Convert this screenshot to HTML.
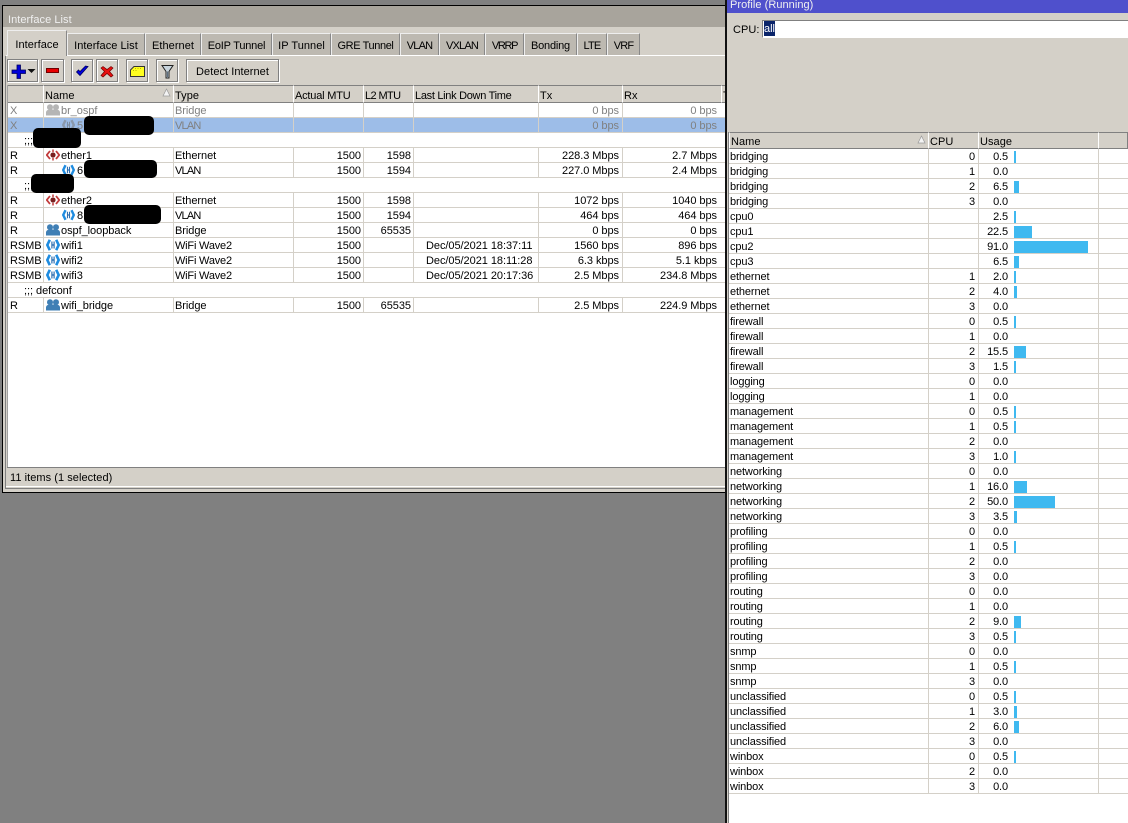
<!DOCTYPE html>
<html><head><meta charset="utf-8"><style>
html,body{margin:0;padding:0}
body{width:1128px;height:823px;overflow:hidden;background:#808080;position:relative;font:11px/14px "Liberation Sans",sans-serif;letter-spacing:.05px;color:#000}
div,span,b,i,u,em{position:absolute;display:block;white-space:nowrap;box-sizing:border-box;font-weight:normal;font-style:normal;text-decoration:none}
.tab{top:33px;height:22px;background:#bdb9b1;border-top:1px solid #eee;border-left:1px solid #eee;border-right:1px solid #888;text-align:center;line-height:25px;overflow:hidden}
.btn{top:59px;height:23px;background:#d4d0c8;border:1px solid #808080;box-shadow:1px 1px 0 #fff,inset 1px 1px 0 #fff;text-align:center;line-height:24px;letter-spacing:.05px}
.btn svg{position:absolute;left:0;top:0}
.h{top:85px;height:18px;background:#d4d0c8;border-top:1px solid #808080;border-bottom:1px solid #808080;border-right:1px solid #808080;border-left:1px solid #fff;line-height:21px;padding-left:1px;overflow:hidden}
.h2{top:132px;height:17px;line-height:18px}
.row{position:relative;height:15px;border-bottom:1px solid #d4d0c8;background:#fff;line-height:14px}
.L .row>span{top:1px;height:14px}
.g{color:#808080}
.sel{background:#9dbde8}
.L{position:absolute;left:8px;top:103px;width:717px;letter-spacing:-.05px}
.v{top:0;height:14px;width:1px;background:#d4d0c8}
.f{left:2px}.n{left:53px}.n2{left:69px}.t{left:167px}
.m{right:364px}.l{right:314px}.d{left:418px}.tx{right:106px}.rx{right:8px}
.c{left:16px}
.vl{letter-spacing:-.8px}.ww{letter-spacing:-.2px}
.R{position:absolute;left:729px;top:149px;width:399px;letter-spacing:-.12px}
.R b{left:1px;top:1px}.R i{right:153px;top:1px}.R u{right:120px;top:1px}.R em{left:285px;top:2px;height:12px;background:#3fb9f0}
svg.ic{position:absolute}
.red{background:#000;border-radius:5px}
</style></head><body>
<svg width="0" height="0" style="position:absolute">
<symbol id="br" viewBox="0 0 14 12"><circle cx="4" cy="3.200" r="3" fill="currentColor"/><circle cx="10" cy="3.200" r="3" fill="currentColor"/><path d="M0 11.500V8.500C0 6.500 2 5.500 4 5.500H10C12 5.500 14 6.500 14 8.500V11.500Z" fill="currentColor"/></symbol>
<symbol id="et" viewBox="0 0 14 12"><path d="M4 2L0.800 6L4 10M10 2L13.200 6L10 10" fill="none" stroke="#c23b3b" stroke-width="1.800"/><path d="M7 .5V3M7 9V11.500" stroke="#c23b3b" stroke-width="1.500"/><circle cx="7" cy="6" r="2.600" fill="#7a1f1f"/></symbol>
<symbol id="wf" viewBox="0 0 14 12"><path d="M3.800 .8L1.300 6L3.800 11.200M10.200 .8L12.700 6L10.200 11.200" fill="none" stroke="#1f8ce0" stroke-width="2.600"/><path d="M5.300 2.500H6.500V9.500H5.300ZM7.500 2.500H8.700V9.500H7.500ZM5.300 5.300H8.700V6.700H5.300Z" fill="#2f6fb0"/></symbol>
</svg>

<!-- left window -->
<div style="left:2px;top:5px;width:730px;height:488px;background:#000"></div>
<div style="left:3px;top:6px;width:730px;height:486px;background:#d4d0c8;border-top:1px solid #a8a49c"></div>
<div style="left:3px;top:7px;width:725px;height:20px;background:#a8a49c"></div>
<div style="left:8px;top:13px;color:#f0f0f0">Interface List</div>
<div style="left:6px;top:55px;width:720px;height:1px;background:#fff"></div>
<div style="left:5px;top:56px;width:1px;height:432px;background:#808080"></div>
<div class="tab" style="left:67px;width:78px">Interface List</div>
<div class="tab" style="left:145px;width:56px">Ethernet</div>
<div class="tab" style="left:201px;width:71px;letter-spacing:-.2px">EoIP Tunnel</div>
<div class="tab" style="left:272px;width:59px">IP Tunnel</div>
<div class="tab" style="left:331px;width:69px;letter-spacing:-.4px">GRE Tunnel</div>
<div class="tab" style="left:400px;width:39px;letter-spacing:-.8px">VLAN</div>
<div class="tab" style="left:439px;width:46px;letter-spacing:-.8px">VXLAN</div>
<div class="tab" style="left:485px;width:39px;letter-spacing:-1.300px">VRRP</div>
<div class="tab" style="left:524px;width:53px;letter-spacing:-.2px">Bonding</div>
<div class="tab" style="left:577px;width:30px;letter-spacing:-.8px">LTE</div>
<div class="tab" style="left:607px;width:33px;letter-spacing:-.8px">VRF</div>
<div class="tab" style="left:7px;top:30px;width:60px;height:26px;background:#d4d0c8;line-height:28px">Interface</div>

<div class="btn" style="left:7px;width:31px"><svg width="29" height="21"><path d="M9 5h3.500V10H17.500v3.500H12.500V18.500H9V13.500H4V10H9z" fill="#0000d8" stroke="#00005a" stroke-width=".8"/><path d="M19.500 9h8l-4 4z" fill="#111"/></svg></div>
<div class="btn" style="left:41px;width:23px"><svg width="21" height="21"><rect x="4.500" y="8.500" width="12" height="4" fill="#e80000" stroke="#700000" stroke-width="1"/></svg></div>
<div class="btn" style="left:71px;width:22px"><svg width="20" height="21"><path d="M4.500 12L8 15.500L16 6.500L13.500 6L8 11.500L6.500 10Z" fill="#0000e0" stroke="#00005a" stroke-width=".8"/></svg></div>
<div class="btn" style="left:96px;width:22px"><svg width="20" height="21"><path d="M6 6.500L10 9.500L14 6.500L16 8L12.500 11.500L16 15.500L14 17L10 13.500L6 17L4 15.500L7.500 11.500L4 8Z" fill="#e81010" stroke="#700000" stroke-width=".7"/></svg></div>
<div class="btn" style="left:126px;width:22px"><svg width="20" height="21"><path d="M7 6.500H17.500V16.500H3.500V10Z" fill="#ffff20" stroke="#333" stroke-width="1"/><path d="M8 8.500h1M10.500 8.500h1M13 8.500h1M6 10.500h1M8.500 10.500h1" stroke="#b8b800" stroke-width="1"/></svg></div>
<div class="btn" style="left:156px;width:22px"><svg width="20" height="21"><path d="M5 5.500H16L12 11.500V18H9V11.500Z" fill="#c8d4dc" stroke="#222" stroke-width="1"/><path d="M10.500 11.500V17" stroke="#607080" stroke-width="1"/></svg></div>
<div class="btn" style="left:186px;width:93px">Detect Internet</div>

<div class="h" style="left:7px;width:37px"></div>
<div class="h" style="left:43px;width:131px">Name<svg style="position:absolute;left:118px;top:2px" width="9" height="9"><path d="M4.500 1L8 8H1Z" fill="#f4f4f4" stroke="#999" stroke-width=".7"/></svg></div>
<div class="h" style="left:173px;width:121px">Type</div>
<div class="h" style="left:293px;width:71px;letter-spacing:-.2px">Actual MTU</div>
<div class="h" style="left:363px;width:51px;letter-spacing:-.6px">L2 MTU</div>
<div class="h" style="left:413px;width:126px;letter-spacing:-.3px">Last Link Down Time</div>
<div class="h" style="left:538px;width:85px">Tx</div>
<div class="h" style="left:622px;width:100px">Rx</div>
<div class="h" style="left:721px;width:10px">T</div>

<div style="left:7px;top:103px;width:720px;height:364px;background:#fff"></div>
<div style="left:7px;top:85px;width:1px;height:382px;background:#a0a0a0"></div>
<div class="L">
<div class="row g"><span class="f">X</span><svg class="ic" style="left:38px;top:1px;color:#b5b5b5" width="14" height="12"><use href="#br"/></svg><span class="n">br_ospf</span><span class="t">Bridge</span><span class="tx">0 bps</span><span class="rx">0 bps</span><i class="v" style="left:35px"></i><i class="v" style="left:165px"></i><i class="v" style="left:285px"></i><i class="v" style="left:355px"></i><i class="v" style="left:405px"></i><i class="v" style="left:530px"></i><i class="v" style="left:614px"></i></div>
<div class="row g sel"><span class="f">X</span><svg class="ic" style="left:54px;top:1px;opacity:.55;filter:grayscale(1)" width="13" height="12"><use href="#wf"/></svg><span class="n2">5</span><span class="t vl">VLAN</span><span class="tx">0 bps</span><span class="rx">0 bps</span><i class="v" style="left:35px"></i><i class="v" style="left:165px"></i><i class="v" style="left:285px"></i><i class="v" style="left:355px"></i><i class="v" style="left:405px"></i><i class="v" style="left:530px"></i><i class="v" style="left:614px"></i></div>
<div class="row"><span class="c">;;;</span></div>
<div class="row"><span class="f">R</span><svg class="ic" style="left:38px;top:1px" width="14" height="12"><use href="#et"/></svg><span class="n">ether1</span><span class="t">Ethernet</span><span class="m">1500</span><span class="l">1598</span><span class="tx">228.3 Mbps</span><span class="rx">2.7 Mbps</span><i class="v" style="left:35px"></i><i class="v" style="left:165px"></i><i class="v" style="left:285px"></i><i class="v" style="left:355px"></i><i class="v" style="left:405px"></i><i class="v" style="left:530px"></i><i class="v" style="left:614px"></i></div>
<div class="row"><span class="f">R</span><svg class="ic" style="left:54px;top:1px" width="13" height="12"><use href="#wf"/></svg><span class="n2">6</span><span class="t vl">VLAN</span><span class="m">1500</span><span class="l">1594</span><span class="tx">227.0 Mbps</span><span class="rx">2.4 Mbps</span><i class="v" style="left:35px"></i><i class="v" style="left:165px"></i><i class="v" style="left:285px"></i><i class="v" style="left:355px"></i><i class="v" style="left:405px"></i><i class="v" style="left:530px"></i><i class="v" style="left:614px"></i></div>
<div class="row"><span class="c">;;;</span></div>
<div class="row"><span class="f">R</span><svg class="ic" style="left:38px;top:1px" width="14" height="12"><use href="#et"/></svg><span class="n">ether2</span><span class="t">Ethernet</span><span class="m">1500</span><span class="l">1598</span><span class="tx">1072 bps</span><span class="rx">1040 bps</span><i class="v" style="left:35px"></i><i class="v" style="left:165px"></i><i class="v" style="left:285px"></i><i class="v" style="left:355px"></i><i class="v" style="left:405px"></i><i class="v" style="left:530px"></i><i class="v" style="left:614px"></i></div>
<div class="row"><span class="f">R</span><svg class="ic" style="left:54px;top:1px" width="13" height="12"><use href="#wf"/></svg><span class="n2">8</span><span class="t vl">VLAN</span><span class="m">1500</span><span class="l">1594</span><span class="tx">464 bps</span><span class="rx">464 bps</span><i class="v" style="left:35px"></i><i class="v" style="left:165px"></i><i class="v" style="left:285px"></i><i class="v" style="left:355px"></i><i class="v" style="left:405px"></i><i class="v" style="left:530px"></i><i class="v" style="left:614px"></i></div>
<div class="row"><span class="f">R</span><svg class="ic" style="left:38px;top:1px;color:#3f7fb5" width="14" height="12"><use href="#br"/></svg><span class="n">ospf_loopback</span><span class="t">Bridge</span><span class="m">1500</span><span class="l">65535</span><span class="tx">0 bps</span><span class="rx">0 bps</span><i class="v" style="left:35px"></i><i class="v" style="left:165px"></i><i class="v" style="left:285px"></i><i class="v" style="left:355px"></i><i class="v" style="left:405px"></i><i class="v" style="left:530px"></i><i class="v" style="left:614px"></i></div>
<div class="row"><span class="f">RSMB</span><svg class="ic" style="left:38px;top:1px" width="14" height="12"><use href="#wf"/></svg><span class="n">wifi1</span><span class="t ww">WiFi Wave2</span><span class="m">1500</span><span class="d">Dec/05/2021 18:37:11</span><span class="tx">1560 bps</span><span class="rx">896 bps</span><i class="v" style="left:35px"></i><i class="v" style="left:165px"></i><i class="v" style="left:285px"></i><i class="v" style="left:355px"></i><i class="v" style="left:405px"></i><i class="v" style="left:530px"></i><i class="v" style="left:614px"></i></div>
<div class="row"><span class="f">RSMB</span><svg class="ic" style="left:38px;top:1px" width="14" height="12"><use href="#wf"/></svg><span class="n">wifi2</span><span class="t ww">WiFi Wave2</span><span class="m">1500</span><span class="d">Dec/05/2021 18:11:28</span><span class="tx">6.3 kbps</span><span class="rx">5.1 kbps</span><i class="v" style="left:35px"></i><i class="v" style="left:165px"></i><i class="v" style="left:285px"></i><i class="v" style="left:355px"></i><i class="v" style="left:405px"></i><i class="v" style="left:530px"></i><i class="v" style="left:614px"></i></div>
<div class="row"><span class="f">RSMB</span><svg class="ic" style="left:38px;top:1px" width="14" height="12"><use href="#wf"/></svg><span class="n">wifi3</span><span class="t ww">WiFi Wave2</span><span class="m">1500</span><span class="d">Dec/05/2021 20:17:36</span><span class="tx">2.5 Mbps</span><span class="rx">234.8 Mbps</span><i class="v" style="left:35px"></i><i class="v" style="left:165px"></i><i class="v" style="left:285px"></i><i class="v" style="left:355px"></i><i class="v" style="left:405px"></i><i class="v" style="left:530px"></i><i class="v" style="left:614px"></i></div>
<div class="row"><span class="c">;;; defconf</span></div>
<div class="row"><span class="f">R</span><svg class="ic" style="left:38px;top:1px;color:#3f7fb5" width="14" height="12"><use href="#br"/></svg><span class="n">wifi_bridge</span><span class="t">Bridge</span><span class="m">1500</span><span class="l">65535</span><span class="tx">2.5 Mbps</span><span class="rx">224.9 Mbps</span><i class="v" style="left:35px"></i><i class="v" style="left:165px"></i><i class="v" style="left:285px"></i><i class="v" style="left:355px"></i><i class="v" style="left:405px"></i><i class="v" style="left:530px"></i><i class="v" style="left:614px"></i></div>
</div>
<div class="red" style="left:84px;top:116px;width:70px;height:19px"></div>
<div class="red" style="left:33px;top:128px;width:48px;height:20px"></div>
<div class="red" style="left:84px;top:160px;width:73px;height:18px"></div>
<div class="red" style="left:31px;top:174px;width:43px;height:19px"></div>
<div class="red" style="left:84px;top:205px;width:77px;height:19px"></div>

<div style="left:7px;top:467px;width:720px;height:1px;background:#808080"></div>
<div style="left:10px;top:471px">11 items (1 selected)</div>
<div style="left:6px;top:486px;width:720px;height:1px;background:#fff"></div>
<div style="left:5px;top:488px;width:720px;height:1px;background:#808080"></div>
<div style="left:0;top:493px;width:726px;height:330px;background:#808080"></div>

<!-- right window -->
<div style="left:725px;top:0;width:403px;height:823px;background:#d4d0c8;border-left:2px solid #111"></div>
<div style="left:727px;top:0;width:401px;height:13px;background:#4f50cc"></div>
<div style="left:730px;top:-2px;color:#f0f0f0">Profile (Running)</div>
<div style="left:733px;top:23px">CPU:</div>
<div style="left:762px;top:20px;width:366px;height:18px;background:#fff;border-top:1px solid #808080;border-left:1px solid #808080;border-bottom:1px solid #fff"></div>
<div style="left:764px;top:21px;width:11px;height:15px;background:#0a246a;color:#fff;line-height:17px;letter-spacing:0">all</div>

<div style="left:729px;top:794px;width:399px;height:29px;background:#fff"></div>
<div style="left:728px;top:132px;width:1px;height:691px;background:#808080"></div>
<div class="h h2" style="left:729px;width:200px">Name<svg style="position:absolute;left:187px;top:2px" width="9" height="9"><path d="M4.500 1L8 8H1Z" fill="#f4f4f4" stroke="#999" stroke-width=".7"/></svg></div>
<div class="h h2" style="left:928px;width:51px">CPU</div>
<div class="h h2" style="left:978px;width:121px">Usage</div>
<div class="h h2" style="left:1098px;width:30px"></div>
<div class="R">
<div class="row"><b>bridging</b><i>0</i><u>0.5</u><em style="width:2px"></em></div>
<div class="row"><b>bridging</b><i>1</i><u>0.0</u></div>
<div class="row"><b>bridging</b><i>2</i><u>6.5</u><em style="width:5px"></em></div>
<div class="row"><b>bridging</b><i>3</i><u>0.0</u></div>
<div class="row"><b>cpu0</b><u>2.5</u><em style="width:2px"></em></div>
<div class="row"><b>cpu1</b><u>22.5</u><em style="width:18px"></em></div>
<div class="row"><b>cpu2</b><u>91.0</u><em style="width:74px"></em></div>
<div class="row"><b>cpu3</b><u>6.5</u><em style="width:5px"></em></div>
<div class="row"><b>ethernet</b><i>1</i><u>2.0</u><em style="width:2px"></em></div>
<div class="row"><b>ethernet</b><i>2</i><u>4.0</u><em style="width:3px"></em></div>
<div class="row"><b>ethernet</b><i>3</i><u>0.0</u></div>
<div class="row"><b>firewall</b><i>0</i><u>0.5</u><em style="width:2px"></em></div>
<div class="row"><b>firewall</b><i>1</i><u>0.0</u></div>
<div class="row"><b>firewall</b><i>2</i><u>15.5</u><em style="width:12px"></em></div>
<div class="row"><b>firewall</b><i>3</i><u>1.5</u><em style="width:2px"></em></div>
<div class="row"><b>logging</b><i>0</i><u>0.0</u></div>
<div class="row"><b>logging</b><i>1</i><u>0.0</u></div>
<div class="row"><b>management</b><i>0</i><u>0.5</u><em style="width:2px"></em></div>
<div class="row"><b>management</b><i>1</i><u>0.5</u><em style="width:2px"></em></div>
<div class="row"><b>management</b><i>2</i><u>0.0</u></div>
<div class="row"><b>management</b><i>3</i><u>1.0</u><em style="width:2px"></em></div>
<div class="row"><b>networking</b><i>0</i><u>0.0</u></div>
<div class="row"><b>networking</b><i>1</i><u>16.0</u><em style="width:13px"></em></div>
<div class="row"><b>networking</b><i>2</i><u>50.0</u><em style="width:41px"></em></div>
<div class="row"><b>networking</b><i>3</i><u>3.5</u><em style="width:3px"></em></div>
<div class="row"><b>profiling</b><i>0</i><u>0.0</u></div>
<div class="row"><b>profiling</b><i>1</i><u>0.5</u><em style="width:2px"></em></div>
<div class="row"><b>profiling</b><i>2</i><u>0.0</u></div>
<div class="row"><b>profiling</b><i>3</i><u>0.0</u></div>
<div class="row"><b>routing</b><i>0</i><u>0.0</u></div>
<div class="row"><b>routing</b><i>1</i><u>0.0</u></div>
<div class="row"><b>routing</b><i>2</i><u>9.0</u><em style="width:7px"></em></div>
<div class="row"><b>routing</b><i>3</i><u>0.5</u><em style="width:2px"></em></div>
<div class="row"><b>snmp</b><i>0</i><u>0.0</u></div>
<div class="row"><b>snmp</b><i>1</i><u>0.5</u><em style="width:2px"></em></div>
<div class="row"><b>snmp</b><i>3</i><u>0.0</u></div>
<div class="row"><b>unclassified</b><i>0</i><u>0.5</u><em style="width:2px"></em></div>
<div class="row"><b>unclassified</b><i>1</i><u>3.0</u><em style="width:3px"></em></div>
<div class="row"><b>unclassified</b><i>2</i><u>6.0</u><em style="width:5px"></em></div>
<div class="row"><b>unclassified</b><i>3</i><u>0.0</u></div>
<div class="row"><b>winbox</b><i>0</i><u>0.5</u><em style="width:2px"></em></div>
<div class="row"><b>winbox</b><i>2</i><u>0.0</u></div>
<div class="row"><b>winbox</b><i>3</i><u>0.0</u></div>
</div>
<div style="left:928px;top:149px;width:1px;height:645px;background:#d4d0c8"></div>
<div style="left:978px;top:149px;width:1px;height:645px;background:#d4d0c8"></div>
<div style="left:1098px;top:149px;width:1px;height:645px;background:#d4d0c8"></div>
</body></html>
